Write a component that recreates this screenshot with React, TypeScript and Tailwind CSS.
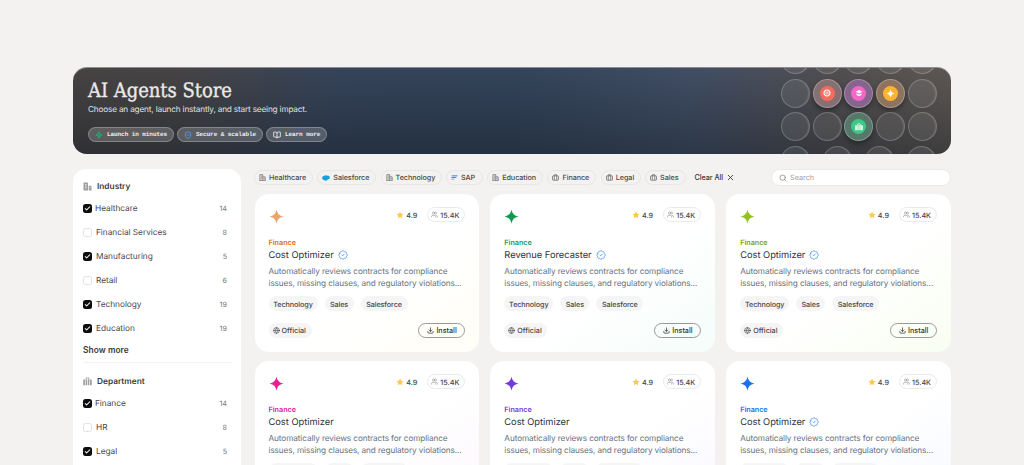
import type { ReactNode } from "react";
import {
  BadgeCheck,
  BookOpen,
  Check,
  Download,
  Globe,
  Search,
  ShieldCheck,
  Users,
  X,
  Zap,
} from "lucide-react";

type Option = { label: string; count: number; checked: boolean };

const INDUSTRIES: Option[] = [
  { label: "Healthcare", count: 14, checked: true },
  { label: "Financial Services", count: 8, checked: false },
  { label: "Manufacturing", count: 5, checked: true },
  { label: "Retail", count: 6, checked: false },
  { label: "Technology", count: 19, checked: true },
  { label: "Education", count: 19, checked: true },
];

const DEPARTMENTS: Option[] = [
  { label: "Finance", count: 14, checked: true },
  { label: "HR", count: 8, checked: false },
  { label: "Legal", count: 5, checked: true },
];

const CHIPS = [
  { label: "Healthcare", icon: "building", width: "w-[59px]" },
  { label: "Salesforce", icon: "cloud", width: "w-[59px]" },
  { label: "Technology", icon: "building", width: "w-[61px]" },
  { label: "SAP", icon: "sap", width: "w-[37px]" },
  { label: "Education", icon: "building", width: "w-[56px]" },
  { label: "Finance", icon: "case", width: "w-[49px]" },
  { label: "Legal", icon: "case", width: "w-[40px]" },
  { label: "Sales", icon: "case", width: "w-[41px]" },
];

const AGENTS = [
  { name: "Cost Optimizer", verified: true, star: "text-[#eda468]", label: "text-[#df6b0b]", bg: "to-[#fffef6]" },
  { name: "Revenue Forecaster", verified: true, star: "text-[#0b9b50]", label: "text-[#159b55]", bg: "to-[#f5fdfb]" },
  { name: "Cost Optimizer", verified: true, star: "text-[#95c11f]", label: "text-[#78a011]", bg: "to-[#f9fef1]" },
  { name: "Cost Optimizer", verified: false, star: "text-[#e52290]", label: "text-[#e01b94]", bg: "to-[#fdf7fc]" },
  { name: "Cost Optimizer", verified: false, star: "text-[#7337e8]", label: "text-[#7a35e8]", bg: "to-[#f9f7ff]" },
  { name: "Cost Optimizer", verified: true, star: "text-[#1b6ff2]", label: "text-[#1272ed]", bg: "to-[#f4f8ff]" },
];

function Sparkle({ className }: { className: string }) {
  return (
    <svg viewBox="0 0 16 16" className={className} fill="currentColor">
      <path d="M8 .4C8.800 4.800 11 7.100 15.600 8 11 8.900 8.800 11.200 8 15.600 7.200 11.200 5 8.900.4 8 5 7.100 7.200 4.800 8 .4Z" />
    </svg>
  );
}

function StarIcon() {
  return (
    <svg viewBox="0 0 16 16" className="size-[8px] text-[#fdca4f]" fill="currentColor">
      <path d="m8 .8 2.200 4.600 5 .7-3.700 3.500.9 5L8 12.200l-4.400 2.400.9-5L.8 6.100l5-.7Z" />
    </svg>
  );
}

function BuildingOutline() {
  return (
    <svg viewBox="0 0 16 16" className="size-[7px] text-[#555]" fill="none" stroke="currentColor" strokeWidth="1.500">
      <path d="M2 14.500V1.500h6.500v13M8.500 6.500H14v8M.8 14.500h14.400M4.200 5h2M4.200 8h2M4.200 11h2M11.300 9.500v2" />
    </svg>
  );
}

function CaseOutline() {
  return (
    <svg viewBox="0 0 16 16" className="size-[7px] text-[#555]" fill="none" stroke="currentColor" strokeWidth="1.500">
      <rect x="1.200" y="4.200" width="13.600" height="10" rx="1.600" />
      <path d="M5.200 14V2.500c0-.7.4-1 1-1h3.600c.6 0 1 .3 1 1V14" />
    </svg>
  );
}

function BuildingSolid() {
  return (
    <svg viewBox="0 0 18 18" className="size-[9px] text-[#a0a0a0]" fill="currentColor">
      <path
        fillRule="evenodd"
        d="M1 17V2q0-1 1-1h7q1 0 1 1v15ZM4 4v1.600h3V4Zm0 3.500v1.600h3V7.500Zm0 3.500v1.600h3V11ZM11.500 7.500H16q1 0 1 1V17h-5.500Zm2 3v1.500h1.500v-1.500Z"
      />
    </svg>
  );
}

function CaseSolid({ className }: { className: string }) {
  return (
    <svg viewBox="0 0 18 18" className={className} fill="currentColor">
      <path d="M1.500 5H4v11.500H1.500q-1 0-1-1V6q0-1 1-1ZM14 5h2.500q1 0 1 1v9.500q0 1-1 1H14Z" />
      <path d="M5.300 5V3q0-2 2-2h3.400q2 0 2 2v2h-1.600V3.400q0-.8-.8-.8H7.700q-.8 0-.8.800V5ZM5.300 5h3v11.500h-3ZM9.700 5h3v11.500h-3Z" />
    </svg>
  );
}

function ChipIcon({ name }: { name: string }) {
  if (name === "building") return <BuildingOutline />;
  if (name === "case") return <CaseOutline />;
  if (name === "cloud") {
    return (
      <svg viewBox="0 0 16 12" className="h-[6px] w-[8px] text-[#17a0e0]" fill="currentColor">
        <circle cx="4" cy="6" r="3.800" />
        <circle cx="7" cy="4" r="3.600" />
        <circle cx="11.500" cy="5.200" r="4" />
        <circle cx="7.500" cy="8.300" r="3.300" />
      </svg>
    );
  }
  return (
    <svg viewBox="0 0 16 10" className="h-[5px] w-[7px]" fill="none" strokeWidth="2.400">
      <path d="M1.500 1.200H15" stroke="#3f8bf5" />
      <path d="M1 5h11" stroke="#3f8bf5" />
      <path d="M.5 8.800h7" stroke="#7fb2fa" />
    </svg>
  );
}

function HeroPill({ icon, children, width }: { icon: ReactNode; children: ReactNode; width: string }) {
  return (
    <span className={`flex h-[15px] shrink-0 items-center gap-[4px] rounded-full border border-white/25 bg-white/20 pl-[6px] ${width}`}>
      {icon}
      <span className="font-['Liberation_Mono',monospace] text-[6px] font-bold tracking-[-0.070px] whitespace-nowrap text-white/90">
        {children}
      </span>
    </span>
  );
}

function Orb({ color, inner, children }: { color?: string; inner?: string; children?: ReactNode }) {
  return (
    <span
      className={`flex size-[29px] shrink-0 items-center justify-center rounded-full border ${
        color
          ? `border-white/25 shadow-[0_3px_5px_rgba(0,0,0,0.35)] ${color}`
          : "border-white/20 bg-white/8 shadow-[inset_-1px_0_1px_rgba(255,255,255,0.12)]"
      }`}
    >
      {inner && <span className={`flex size-[15px] items-center justify-center rounded-full text-white ${inner}`}>{children}</span>}
    </span>
  );
}

function Hero() {
  return (
    <header className="relative h-[87px] overflow-hidden rounded-[14px] border-t border-[#8d8e91] bg-[linear-gradient(180deg,rgba(10,18,28,0)_0%,rgba(10,18,28,0.380)_100%),linear-gradient(98deg,#474343_0%,#464445_12%,#36445a_30%,#34445a_50%,#414e64_70%,#524f50_86%,#5e5853_100%)] px-[15px] pt-[10px]">
      <h1 className="font-['DejaVu_Serif_Condensed','DejaVu_Serif',serif] text-[20px] leading-[25px] tracking-[-0.030px] whitespace-nowrap text-[#ebe9e6] [-webkit-text-stroke:0.350px_#ebe9e6]">
        AI Agents Store
      </h1>
      <p className="text-[8.200px] leading-[12px] tracking-[-0.160px] text-[#e2e2e3]">
        Choose an agent, launch instantly, and start seeing impact.
      </p>
      <div className="mt-[12px] flex gap-[3px]">
        <HeroPill width="w-[86px]" icon={<Zap className="size-[8px] fill-[#1fb573]/40 text-[#1fb573]" strokeWidth={2.500} />}>
          Launch in minutes
        </HeroPill>
        <HeroPill width="w-[86px]" icon={<ShieldCheck className="size-[8px] text-[#5b9cf5]" strokeWidth={2.500} />}>
          Secure &amp; scalable
        </HeroPill>
        <HeroPill width="w-[61px]" icon={<BookOpen className="size-[8px] text-white/90" strokeWidth={2.500} />}>
          Learn more
        </HeroPill>
      </div>

      {/* Orb grid, bleeds past the top and bottom edges */}
      <div className="absolute -top-[23px] right-[14.500px] flex w-[155.500px] flex-col gap-[4.500px]">
        <div className="flex justify-between">
          <Orb />
          <Orb />
          <Orb />
          <Orb />
          <Orb />
        </div>
        <div className="flex justify-between">
          <Orb />
          <Orb color="bg-[#857174]" inner="bg-[#f9695c]">
            <svg viewBox="0 0 16 16" className="size-[8px]" fill="none" stroke="currentColor">
              <circle cx="8" cy="8" r="6" strokeWidth="2.400" />
              <path d="M4 6h8M4 10h8M8 6v4" strokeWidth="1.300" />
            </svg>
          </Orb>
          <Orb color="bg-[#85658b]" inner="bg-[#f468c5]">
            <svg viewBox="0 0 16 16" className="size-[8px]" fill="currentColor">
              <path d="M8 2 15 5.500 8 9 1 5.500ZM3 8.500l5 2.500 5-2.500v3.500L8 14.500 3 12Z" />
            </svg>
          </Orb>
          <Orb color="bg-[#8e745f]" inner="bg-[#fdb332]">
            <Sparkle className="size-[9px]" />
          </Orb>
          <Orb />
        </div>
        <div className="flex justify-between">
          <Orb />
          <Orb />
          <Orb color="bg-[#56786b]" inner="bg-[#3dc985]">
            <CaseSolid className="size-[8px]" />
          </Orb>
          <Orb />
          <Orb />
        </div>
        <div className="flex justify-between">
          <Orb />
          <Orb />
          <Orb />
          <Orb />
        </div>
      </div>
    </header>
  );
}

function FilterRow({ option, first }: { option: Option; first: boolean }) {
  return (
    <label className="flex h-[24px] items-center">
      <span
        className={`flex size-[9px] items-center justify-center rounded-[2.500px] ${
          option.checked ? "bg-[#0d0d0f]" : "border border-[#e2e2e2] bg-white"
        }`}
      >
        {option.checked && <Check className="size-[7px] text-white" strokeWidth={3.500} />}
      </span>
      <span className={`pt-[2px] text-[8.300px] tracking-[-0.030px] text-[#484848] ${first ? "ml-[3px]" : "ml-[4px]"}`}>
        {option.label}
      </span>
      <span className="ml-auto pt-[2px] text-[7.200px] text-[#777]">{option.count}</span>
    </label>
  );
}

function FilterGroup({ icon, title, options }: { icon: ReactNode; title: string; options: Option[] }) {
  return (
    <section>
      <h2 className="flex h-[14px] items-center gap-[5px] text-[8.300px] font-semibold text-[#3a3a3a]">
        {icon}
        <span className="pt-[2px]">{title}</span>
      </h2>
      <div className="mt-[3px] pr-[5px]">
        {options.map((option, i) => (
          <FilterRow key={option.label} option={option} first={i === 0} />
        ))}
      </div>
    </section>
  );
}

function Sidebar() {
  return (
    <aside className="h-[320px] w-[168px] shrink-0 rounded-t-[13px] bg-white pt-[10px] pr-[9px] pl-[10px]">
      <FilterGroup icon={<BuildingSolid />} title="Industry" options={INDUSTRIES} />
      <button className="block h-[20px] text-[8.300px] font-semibold tracking-[0.090px] text-[#3a3a3a]">Show more</button>
      <div className="mt-[2px] mb-[11px] border-t border-[#f4f4f4]" />
      <FilterGroup icon={<CaseSolid className="size-[9px] text-[#a0a0a0]" />} title="Department" options={DEPARTMENTS} />
    </aside>
  );
}

function Toolbar() {
  return (
    <div className="flex h-[17px] items-center text-[7.200px] leading-[11px] font-medium">
      <div className="flex gap-[4.300px]">
        {CHIPS.map((chip) => (
          <span
            key={chip.label}
            className={`flex h-[15px] shrink-0 items-center gap-[3px] rounded-full border border-[#e7e6e5] pl-[4px] tracking-[-0.050px] text-[#484848] ${chip.width}`}
          >
            <ChipIcon name={chip.icon} />
            {chip.label}
          </span>
        ))}
      </div>
      <button className="ml-[8.500px] flex items-center gap-[3px] tracking-[-0.050px] whitespace-nowrap text-[#333]">
        Clear All
        <X className="size-[9px]" strokeWidth={2.200} />
      </button>
      <div className="ml-auto flex h-[17px] w-[180px] items-center gap-[3px] rounded-full border border-[#eae9e8] bg-white pl-[7px] font-normal text-[#a0a0a0]">
        <Search className="size-[8px] text-[#777]" />
        <span className="tracking-[0.050px]">Search</span>
      </div>
    </div>
  );
}

function Tag({ children, width }: { children: ReactNode; width: string }) {
  return (
    <span className={`flex h-[15px] items-center justify-center rounded-full bg-[#f5f5f5] pt-[1px] tracking-[-0.080px] ${width}`}>
      {children}
    </span>
  );
}

function AgentCard({ agent }: { agent: (typeof AGENTS)[number] }) {
  return (
    <article className={`h-[158px] rounded-[14px] bg-linear-to-br from-white from-55% px-[14px] pt-[13px] ${agent.bg}`}>
      <div className="flex items-start">
        <Sparkle className={`mt-[2px] size-[15px] ${agent.star}`} />
        <div className="ml-auto flex items-center text-[7.200px] leading-[11px] font-medium text-[#414652]">
          <StarIcon />
          <span className="ml-[2px] pt-[1px]">4.9</span>
          <span className="ml-[10px] flex h-[15px] w-[38px] items-center gap-[2px] rounded-full border border-[#e9eaef] pl-[3px]">
            <Users className="size-[7px] text-[#888]" />
            <span className="pt-[1px]">15.4K</span>
          </span>
        </div>
      </div>
      <p className={`mt-[14px] text-[7.200px] leading-[10px] font-semibold ${agent.label}`}>Finance</p>
      <h3 className="flex h-[13px] items-center gap-[4px] text-[9.300px] leading-[13px] tracking-[-0.010px] text-[#2a3140]">
        <span className="pt-[1px]">{agent.name}</span>
        {agent.verified && <BadgeCheck className="size-[10px] text-[#4a91f2]" />}
      </h3>
      <p className="mt-[4px] text-[8.200px] leading-[12px] tracking-[-0.090px] whitespace-nowrap text-[#667080]">
        Automatically reviews contracts for compliance
        <br />
        issues, missing clauses, and regulatory violations...
      </p>
      <div className="mt-[7px] flex gap-[7px] text-[7.200px] leading-[11px] font-medium text-[#484848]">
        <Tag width="w-[49px]">Technology</Tag>
        <Tag width="w-[29px]">Sales</Tag>
        <Tag width="w-[47px]">Salesforce</Tag>
      </div>
      <div className="mt-[12px] flex justify-between text-[7.200px] leading-[11px] font-medium text-[#484848]">
        <span className="flex h-[15px] w-[43px] items-center gap-[2px] rounded-full bg-[#f5f5f5] pl-[4px]">
          <Globe className="size-[7px]" />
          Official
        </span>
        <button className="flex h-[15px] w-[47px] items-center justify-center gap-[2.500px] rounded-full border border-[#999] text-[#333]">
          <Download className="size-[7px]" strokeWidth={2.500} />
          Install
        </button>
      </div>
    </article>
  );
}

export default function App() {
  return (
    <div className="h-[465px] w-[1024px] overflow-hidden bg-[#f3f2f0] pt-[67px] pr-[73px] pl-[73px] font-['Inter',sans-serif] [text-rendering:geometricPrecision]">
      <Hero />
      <div className="mt-[15px] flex">
        <Sidebar />
        <main className="ml-[13px] min-w-0 flex-1">
          <Toolbar />
          <div className="mt-[8px] grid grid-cols-3 gap-x-[11px] gap-y-[9px] pl-[0.500px]">
            {AGENTS.map((agent, i) => (
              <AgentCard key={i} agent={agent} />
            ))}
          </div>
        </main>
      </div>
    </div>
  );
}
